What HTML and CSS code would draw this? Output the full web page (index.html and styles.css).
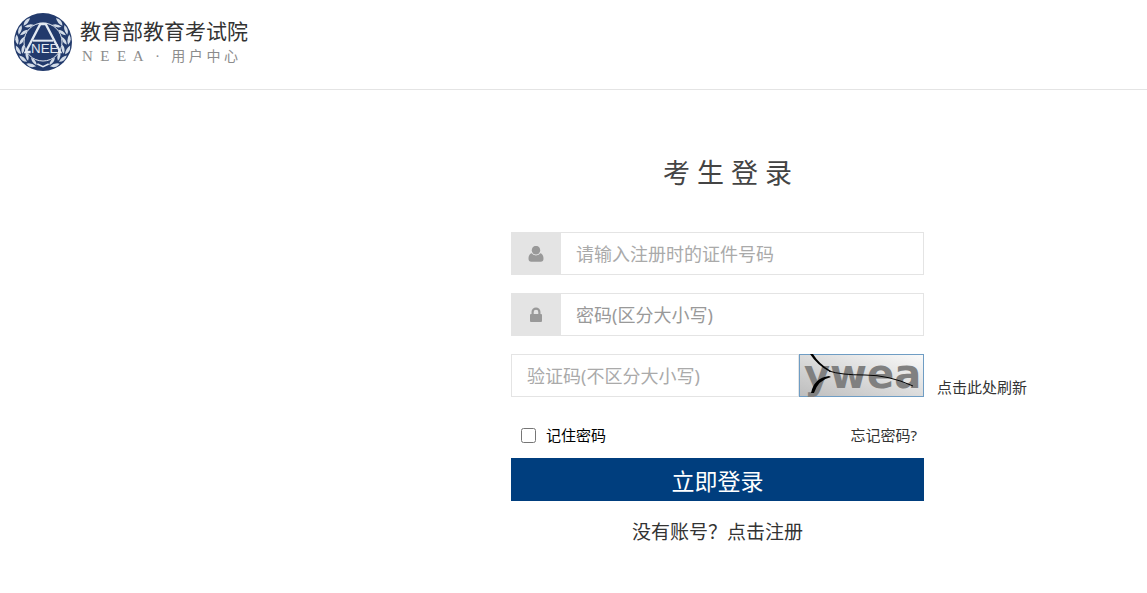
FILE: index.html
```
<!DOCTYPE html>
<html lang="zh-CN">
<head>
  <meta charset="UTF-8">
  <title>考生登录</title>
  <link rel="stylesheet" href="styles.css">
</head>
<body>
  <header class="header">
    <svg class="logo" viewBox="0 0 174 174" aria-hidden="true">
      <defs>
        <g id="leaf">
          <path d="M12 99 Q-2 87 7 69 Q17 82 12 99Z"/>
          <path d="M16 99 Q16 82 30 74 Q31 91 16 99Z"/>
        </g>
        <g id="branch">
          <use href="#leaf" transform="rotate(-65 87 87)"/>
          <use href="#leaf" transform="rotate(-42 87 87)"/>
          <use href="#leaf" transform="rotate(-20 87 87)"/>
          <use href="#leaf" transform="rotate(3 87 87)"/>
          <use href="#leaf" transform="rotate(26 87 87)"/>
          <use href="#leaf" transform="rotate(49 87 87)"/>
        </g>
      </defs>
      <circle cx="87" cy="87" r="87" fill="#223a6c"/>
      <g fill="#d3dce8">
        <use href="#branch"/>
        <use href="#branch" transform="translate(174 0) scale(-1 1)"/>
      </g>
      <g fill="none" stroke="#e3e9f1">
        <circle cx="87" cy="87" r="57" fill="#223a6c" stroke-width="3"/>
        <path d="M50 117 H35 L79 33 H95 L139 117 H132" stroke-width="7"/>
        <path d="M57 83 H117" stroke-width="6"/>
        <path d="M70 153 L87 161 L104 153" stroke-width="5"/>
      </g>
      <text class="logo-text" x="51" y="120">NEE</text>
    </svg>
    <div class="brand">
      <div class="brand-name">教育部教育考试院</div>
      <div class="brand-sub"><span class="latin">N&nbsp; E&nbsp; E&nbsp; A&nbsp;&nbsp; ·&nbsp;&nbsp; </span>用 户 中 心</div>
    </div>
  </header>

  <main class="main">
    <form class="login">
      <h1 class="title">考 生 登 录</h1>

      <div class="field">
        <label class="icon" for="user" aria-label="证件号码">
          <svg width="16" height="16" viewBox="0 0 16 16"><ellipse cx="8" cy="4.200" rx="4.200" ry="4.400"/><path d="M3.800 7.200C5 8.800 6.400 9.400 8 9.400s3-.6 4.200-2.200c2.300.4 3.300 2.800 3.300 5.600 0 1.800-1 3-2.700 3H3.200c-1.700 0-2.700-1.200-2.700-3 0-2.800 1-5.200 3.300-5.600Z"/></svg>
        </label>
        <input type="text" id="user" placeholder="请输入注册时的证件号码">
      </div>

      <div class="field">
        <label class="icon" for="password" aria-label="密码">
          <svg width="16" height="16" viewBox="0 0 16 16"><path fill-rule="evenodd" d="M3.500 7V5a4.500 4.500 0 0 1 9 0v2h.5q1 0 1 1v6q0 1-1 1H3q-1 0-1-1V8q0-1 1-1ZM5.700 7h4.600V5a2.300 2.300 0 0 0-4.600 0Z"/></svg>
        </label>
        <input class="dark" type="password" id="password" placeholder="密码(区分大小写)">
      </div>

      <div class="field captcha">
        <input type="text" id="code" aria-label="验证码" placeholder="验证码(不区分大小写)">
        <svg class="captcha-img" viewBox="0 0 125 43">
          <defs>
            <linearGradient id="shade" x1="0" y1="1" x2="1" y2="0">
              <stop offset="0" stop-color="#bdbdbd"/>
              <stop offset="1" stop-color="#fafafa"/>
            </linearGradient>
          </defs>
          <rect x=".5" y=".5" width="124" height="42" fill="url(#shade)" stroke="#6f9dc4"/>
          <text class="captcha-text" x="5" y="34">ywea</text>
          <path d="M11 0 L14 0 Q20 10 32 17 L31 18 Q18 11 11 0Z"/>
          <path d="M12 39 Q15 24 30 22 L32 23 Q19 26 15 39Z"/>
          <path d="M30 17 Q42 21 66 21 T114 32" fill="none" stroke="#000"/>
        </svg>
        <a class="refresh" href="#">点击此处刷新</a>
      </div>

      <div class="options">
        <label class="remember"><input type="checkbox"> 记住密码</label>
        <a href="#">忘记密码?</a>
      </div>

      <button class="submit" type="submit">立即登录</button>
      <p class="register">没有账号？<a href="#">点击注册</a></p>
    </form>
  </main>
</body>
</html>
```
FILE: styles.css
```
* {
  box-sizing: border-box;
}
body {
  margin: 0;
  background: #fff;
  color: #333;
  font-family: "Noto Sans", "Noto Sans CJK SC", sans-serif;
  font-size: 15px;
  line-height: 20px;
}
a {
  color: #333;
  text-decoration: none;
}
.header {
  display: flex;
  align-items: center;
  gap: 8px;
  height: 90px;
  padding: 0 14px 6px;
  border-bottom: 1px solid #e4e4e4;
}
.logo {
  width: 58px;
  height: 58px;
}
.logo-text {
  fill: #e3e9f1;
  font-family: "Liberation Sans", sans-serif;
  font-size: 40px;
}
.brand-name {
  font-size: 21px;
  line-height: 28px;
}
.brand-sub {
  padding-left: 2px;
  color: #8c8c8c;
  font-size: 14px;
  line-height: 22px;
}
.latin {
  font-family: "Liberation Serif", serif;
  font-size: 15px;
}
.main {
  display: flex;
  justify-content: center;
  padding: 63px 0 32px 288px;
}
.login {
  width: 413px;
}
.title {
  margin: 0 0 39px;
  padding-left: 20px;
  color: #444;
  font-size: 27px;
  font-weight: normal;
  line-height: 40px;
  text-align: center;
}
.field {
  display: flex;
  height: 43px;
  margin-bottom: 18px;
}
.icon {
  display: flex;
  align-items: center;
  justify-content: center;
  width: 50px;
  background: #e4e4e4;
}
.icon svg {
  fill: #999;
}
.field input {
  flex: 1;
  min-width: 0;
  padding: 0 15px;
  border: 1px solid #e4e4e4;
  border-radius: 0;
  outline: none;
  color: #333;
  font-family: inherit;
  font-size: 18px;
}
.icon + input {
  border-left: 0;
}
.field input::placeholder {
  color: #aaa;
}
.field .dark::placeholder {
  color: #999;
}
/* the refresh link hangs to the right of the form column */
.captcha {
  margin-right: -104px;
  margin-bottom: 28px;
}
.captcha-img {
  width: 125px;
  height: 43px;
  overflow: visible;
}
.captcha-text {
  fill: #808080;
  font-family: "DejaVu Sans", sans-serif;
  font-size: 40px;
  font-weight: bold;
}
.refresh {
  align-self: flex-end;
  width: 104px;
  padding-left: 13px;
  white-space: nowrap;
}
.options {
  display: flex;
  justify-content: space-between;
  margin-bottom: 13px;
  padding: 0 7px 0 10px;
}
.remember {
  display: flex;
  align-items: center;
  gap: 10px;
  color: #000;
}
.remember input {
  width: 15px;
  height: 15px;
  margin: 0;
}
.submit {
  display: block;
  width: 100%;
  height: 43px;
  padding: 0;
  border: 0;
  background: #003e7e;
  color: #fff;
  font-family: inherit;
  font-size: 23px;
}
.register {
  margin: 18px 0 0;
  font-size: 19px;
  line-height: 26px;
  text-align: center;
}
```
